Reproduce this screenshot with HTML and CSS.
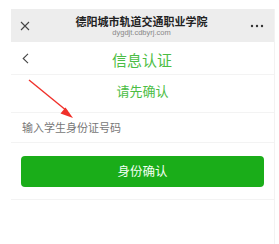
FILE: index.html
```html
<!DOCTYPE html>
<html lang="zh">
<head>
<meta charset="utf-8">
<link rel="stylesheet" href="styles.css">
</head>
<body>
<div class="screen">
  <div class="topbar">
    <span class="close">
      <svg width="10" height="10" viewBox="0 0 10 10"><path d="M1 1L9 9M9 1L1 9" stroke="#444" stroke-width="1.1" fill="none"/></svg>
    </span>
    <div class="titles">
      <div class="title">德阳城市轨道交通职业学院</div>
      <div class="url">dygdjt.cdbyrj.com</div>
    </div>
    <span class="more">
      <svg width="14" height="4" viewBox="0 0 14 4"><circle cx="2" cy="2" r="1.2" fill="#333"/><circle cx="7" cy="2" r="1.2" fill="#333"/><circle cx="12" cy="2" r="1.2" fill="#333"/></svg>
    </span>
  </div>
  <div class="nav">
    <span class="back">
      <svg width="7" height="11" viewBox="0 0 7 11"><path d="M6 0.8L1.2 5.5L6 10.2" stroke="#444" stroke-width="1.1" fill="none"/></svg>
    </span>
    <div class="navtitle">信息认证</div>
  </div>
  <div class="subtitle">请先确认</div>
  <div class="inputrow">输入学生身份证号码</div>
  <div class="btnwrap">
    <div class="btn">身份确认</div>
  </div>
  <svg class="arrow" width="60" height="50" viewBox="0 0 60 50">
    <path d="M2 2L40 33" stroke="#f0302a" stroke-width="1.4" fill="none"/>
    <path d="M46 40L33.5 35.5L38.5 29.5Z" fill="#f0302a"/>
  </svg>
</div>
</body>
</html>
```
FILE: styles.css
```css
* { box-sizing: border-box; margin: 0; padding: 0; }
body {
  background: #fff;
  font-family: "Noto Sans CJK SC", "Noto Sans", sans-serif;
  width: 279px;
  height: 244px;
  overflow: hidden;
}
.screen {
  position: relative;
  margin: 9px 0 0 11px;
  width: 264px;
  height: 235px;
  border-right: 1px solid #f2f2f2;
}
.topbar {
  height: 33px;
  background: #ededed;
  display: flex;
  align-items: center;
  position: relative;
}
.close {
  position: absolute;
  left: 9px;
  top: 12px;
  display: flex;
}
.titles {
  flex: 1;
  text-align: center;
  padding-right: 2px;
  padding-top: 1px;
}
.title {
  font-size: 11px;
  line-height: 14px;
  font-weight: 700;
  color: #222;
}
.url {
  font-size: 7.5px;
  line-height: 10px;
  color: #888;
  font-family: "Liberation Sans", sans-serif;
}
.more {
  position: absolute;
  left: 239px;
  top: 15px;
  display: flex;
}
.nav {
  height: 33px;
  border-bottom: 1px solid #f3f3f3;
  display: flex;
  align-items: center;
  justify-content: center;
  position: relative;
}
.back {
  position: absolute;
  left: 11px;
  top: 11px;
  display: flex;
}
.navtitle {
  font-size: 15px;
  color: #4bbd44;
  padding-right: 1px;
  margin-top: 3px;
}
.subtitle {
  height: 38px;
  border-bottom: 1px solid #f3f3f3;
  text-align: center;
  font-size: 13px;
  line-height: 32px;
  color: #4bbd44;
}
.inputrow {
  height: 30px;
  border-bottom: 1px solid #f3f3f3;
  font-size: 11px;
  line-height: 29px;
  color: #777;
  padding-left: 11px;
}
.btnwrap {
  height: 57px;
  border-bottom: 1px solid #f3f3f3;
  padding: 13px 10px 0 10px;
}
.btn {
  height: 31px;
  border-radius: 4px;
  background: #1aad19;
  color: #f4fff4;
  font-size: 12.5px;
  text-align: center;
  line-height: 30px;
}
.arrow {
  position: absolute;
  left: 16px;
  top: 69px;
}
```
